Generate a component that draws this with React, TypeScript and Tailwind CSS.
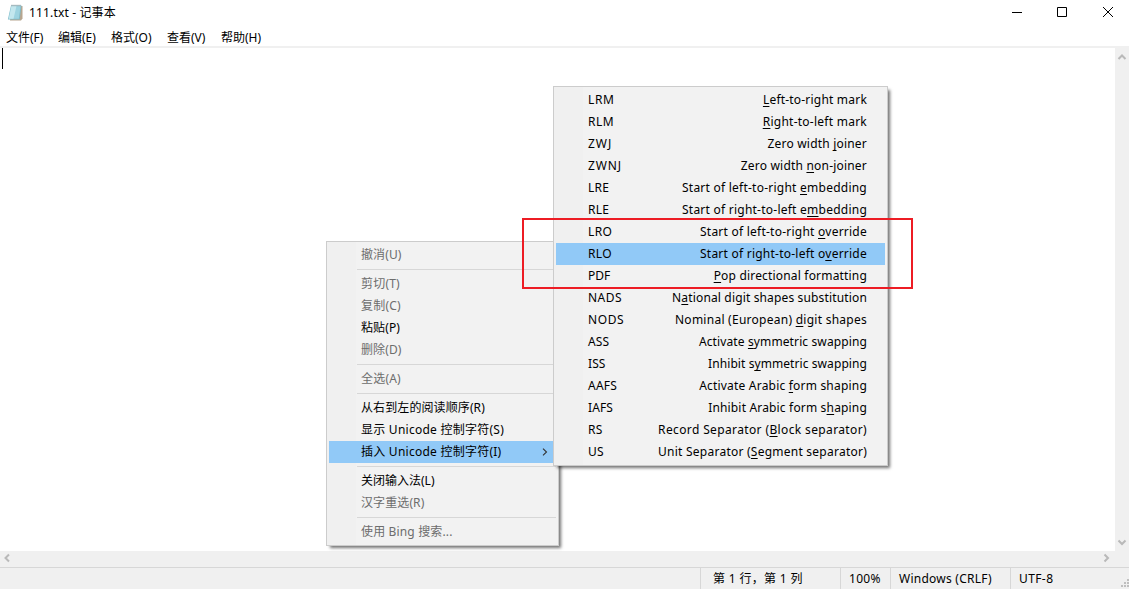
import React from "react";

type Entry = { label: string; disabled?: boolean; active?: boolean; tracking?: string };

const menuBar = [
  { label: "文件(F)", width: "w-[52px]" },
  { label: "编辑(E)", width: "w-[53px]" },
  { label: "格式(O)", width: "w-[56px]" },
  { label: "查看(V)", width: "w-[54px]" },
  { label: "帮助(H)", width: "w-[60px]" },
];

const editGroups: Entry[][] = [
  [{ label: "撤消(U)", disabled: true, tracking: "tracking-[0.1px]" }],
  [
    { label: "剪切(T)", disabled: true, tracking: "tracking-[0.2px]" },
    { label: "复制(C)", disabled: true, tracking: "tracking-[0.2px]" },
    { label: "粘贴(P)", tracking: "tracking-[0.1px]" },
    { label: "删除(D)", disabled: true, tracking: "tracking-[0.1px]" },
  ],
  [{ label: "全选(A)", disabled: true, tracking: "tracking-[0.2px]" }],
  [
    { label: "从右到左的阅读顺序(R)", tracking: "tracking-[0.1px]" },
    { label: "显示 Unicode 控制字符(S)", tracking: "tracking-[0.25px]" },
    { label: "插入 Unicode 控制字符(I)", active: true, tracking: "tracking-[0.25px]" },
  ],
  [{ label: "关闭输入法(L)" }, { label: "汉字重选(R)", disabled: true, tracking: "tracking-[0.1px]" }],
  [{ label: "使用 Bing 搜索...", disabled: true, tracking: "tracking-[0.15px]" }],
];

// code, its tracking, description (the underscore marks the access key that follows it), its tracking
const controls: [string, string, string, string][] = [
  ["LRM", "tracking-[0.6px]", "_Left-to-right mark", "tracking-[0.2px]"],
  ["RLM", "tracking-[0.5px]", "_Right-to-left mark", "tracking-[0.25px]"],
  ["ZWJ", "tracking-[1px]", "Zero width _joiner", "tracking-[0.2px]"],
  ["ZWNJ", "tracking-[0.9px]", "Zero width _non-joiner", "tracking-[0.2px]"],
  ["LRE", "tracking-[0.2px]", "Start of left-to-right _embedding", "tracking-[0.24px]"],
  ["RLE", "tracking-[0.2px]", "Start of right-to-left e_mbedding", "tracking-[0.24px]"],
  ["LRO", "tracking-[0.4px]", "Start of left-to-right _override", "tracking-[0.24px]"],
  ["RLO", "tracking-[0.4px]", "Start of right-to-left o_verride", "tracking-[0.24px]"],
  ["PDF", "tracking-[0px]", "_Pop directional formatting", "tracking-[0.18px]"],
  ["NADS", "tracking-[0.5px]", "N_ational digit shapes substitution", "tracking-[0.15px]"],
  ["NODS", "tracking-[0.6px]", "Nominal (European) _digit shapes", "tracking-[0.26px]"],
  ["ASS", "tracking-[0.1px]", "Activate _symmetric swapping", "tracking-[0.12px]"],
  ["ISS", "tracking-[0.1px]", "Inhibit s_ymmetric swapping", "tracking-[0.08px]"],
  ["AAFS", "tracking-[0.25px]", "Activate Arabic _form shaping", "tracking-[0.2px]"],
  ["IAFS", "tracking-[0.1px]", "Inhibit Arabic form s_haping", "tracking-[0.17px]"],
  ["RS", "tracking-[0.2px]", "Record Separator (_Block separator)", "tracking-[0.37px]"],
  ["US", "tracking-[0.2px]", "Unit Separator (_Segment separator)", "tracking-[0.24px]"],
];

function NotepadIcon() {
  return (
    <svg width="17" height="18" viewBox="0 0 17 18" className="shrink-0">
      <path d="M5 2h10.500v12.500L14 16.500H3z" fill="#b7a68f" />
      <path d="M4 1.500h10.500L12.700 15.500H.9z" fill="#7fbccb" />
      <path d="M4.400 2H13.600l-1.800 12.800H1.800z" fill="#9dd3e0" />
      <path d="M4.400 2H9.500L6.500 14.800H1.800z" fill="#c3e7ee" />
      <path d="M4.500 1.500h10" stroke="#8b979a" strokeWidth="1.600" strokeDasharray="1 1" />
    </svg>
  );
}

function Chevron({ className = "", d }: { className?: string; d: string }) {
  return (
    <svg width="10" height="10" viewBox="0 0 10 10" fill="none" stroke="#b9b9b9" strokeWidth="2" className={className}>
      <path d={d} />
    </svg>
  );
}

function AccessLabel({ text }: { text: string }) {
  const i = text.indexOf("_");
  return (
    <>
      {text.slice(0, i)}
      <span className="underline decoration-1 underline-offset-[1.5px] [text-decoration-skip-ink:none]">{text[i + 1]}</span>
      {text.slice(i + 2)}
    </>
  );
}

function ContextMenu() {
  return (
    <div className="absolute left-[326px] top-[241px] w-[233px] border border-[#ccc] bg-[linear-gradient(to_right,#f0f0f0_29px,#f2f2f2_29px)] p-[2px] shadow-[3px_3px_3px_-1px_rgba(0,0,0,0.55)]">
      {editGroups.map((group, g) => (
        <React.Fragment key={g}>
          {g > 0 && (
            <div className="flex h-[7px] items-center pl-7">
              <div className="h-px grow bg-[#d7d7d7]" />
            </div>
          )}
          {group.map((e) => (
            <div
              key={e.label}
              className={`flex h-[22px] items-center whitespace-nowrap pl-8 ${e.active ? "bg-[#91c9f7]" : ""} ${e.disabled ? "text-[#6d6d6d]" : ""}`}
            >
              <span className={`grow ${e.tracking ?? ""}`}>{e.label}</span>
              {e.active && (
                <svg width="6" height="8" viewBox="0 0 6 8" fill="none" stroke="#333" strokeWidth="1.1" className="mr-[8px]">
                  <path d="M1 .7 4.500 4 1 7.300" />
                </svg>
              )}
            </div>
          ))}
        </React.Fragment>
      ))}
    </div>
  );
}

function ControlMenu() {
  return (
    <div className="absolute left-[553px] top-[86px] w-[335px] border border-[#ccc] bg-[linear-gradient(to_right,#f0f0f0_29px,#f2f2f2_29px)] p-[2px] shadow-[3px_3px_3px_-1px_rgba(0,0,0,0.55)]">
      {controls.map(([code, codeTracking, text, tracking]) => (
        <div
          key={code}
          className={`flex h-[22px] items-center justify-between whitespace-nowrap pl-8 pr-[18px] ${code === "RLO" ? "bg-[#91c9f7]" : ""}`}
        >
          <span className={codeTracking}>{code}</span>
          <span className={tracking}>
            <AccessLabel text={text} />
          </span>
        </div>
      ))}
    </div>
  );
}

export default function App() {
  return (
    <div className="relative flex h-[589px] w-[1129px] flex-col overflow-hidden bg-white font-['Noto_Sans','Noto_Sans_CJK_SC',sans-serif] text-[12px] leading-[22px] text-black">
      <header className="flex h-[25px] items-center pl-[7px]">
        <NotepadIcon />
        <span className="ml-[5px] grow tracking-[0.15px]">111.txt - 记事本</span>
        <svg width="102" height="10" viewBox="0 0 102 10" fill="none" stroke="#000" className="mb-px mr-[15px]">
          <path d="M0 5.500h10M45.500.5h9v9h-9z" />
          <path d="M91 0l10 10M101 0 91 10" />
        </svg>
      </header>
      <nav className="flex h-[21px] items-end pl-[6px]">
        {menuBar.map((m) => (
          <span key={m.label} className={`${m.width} h-[19px] whitespace-nowrap`}>
            {m.label}
          </span>
        ))}
      </nav>
      <div className="h-[2px] bg-[#f0f0f0]" />
      <main className="flex h-[503px]">
        <div className="grow pl-[2px]">
          <div className="h-[21px] w-px bg-black" />
        </div>
        <div className="flex w-[14px] flex-col items-center justify-between bg-[#f0f0f0] pb-[4px] pt-[4px]">
          <Chevron d="M1.500 7 5 3.500 8.500 7" />
          <Chevron d="M1.500 3.500 5 7 8.500 3.500" />
        </div>
      </main>
      <div className="flex h-4 items-start justify-between bg-[#f0f0f0] pl-[2px] pr-[18px] pt-[2px]">
        <Chevron d="M7 1.500 3.500 5 7 8.500" />
        <Chevron d="M3.500 1.500 7 5 3.500 8.500" />
      </div>
      <footer className="flex h-[22px] border-t border-[#d7d7d7] bg-[#f0f0f0] pl-[700px]">
        <span className="w-[140px] border-l border-[#d7d7d7] pl-[12px] tracking-[0.33px]">第 1 行，第 1 列</span>
        <span className="w-[50px] border-l border-[#d7d7d7] pl-2 tracking-[0.3px]">100%</span>
        <span className="w-[120px] whitespace-nowrap border-l border-[#d7d7d7] pl-2 tracking-[0.25px]">Windows (CRLF)</span>
        <span className="grow border-l border-[#d7d7d7] pl-2 tracking-[0.4px]">UTF-8</span>
        <svg width="8" height="8" viewBox="0 0 8 8" fill="#bfbfbf" className="mb-[2px] self-end">
          <path d="M6 0h2v2H6zM3 3h2v2H3zM6 3h2v2H6zM0 6h2v2H0zM3 6h2v2H3zM6 6h2v2H6z" />
        </svg>
      </footer>
      <ContextMenu />
      <ControlMenu />
      <div className="absolute left-[522px] top-[218px] h-[71px] w-[391px] border-2 border-[#ed1c24]" />
    </div>
  );
}
